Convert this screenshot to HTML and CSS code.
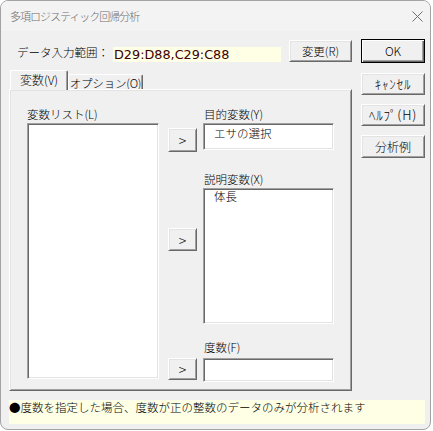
FILE: index.html
```html
<!DOCTYPE html>
<html lang="ja">
<head>
<meta charset="utf-8">
<title>多項ロジスティック回帰分析</title>
<link rel="stylesheet" href="styles.css">
</head>
<body>
<div class="window">
  <div class="titlebar">
    <span class="title">多項ロジスティック回帰分析</span>
    <svg class="close" viewBox="0 0 11 11" width="11" height="11"><path d="M0.5 0.5 L10.5 10.5 M10.5 0.5 L0.5 10.5" stroke="#6f6f6f" stroke-width="1" fill="none"/></svg>
  </div>
  <div class="client">
    <div class="main">
      <div class="left">
        <div class="range-row">
          <span class="range-label">データ入力範囲：</span>
          <span class="range-field">D29:D88,C29:C88</span>
          <button class="btn change">変更(R)</button>
        </div>
        <div class="tabs">
          <div class="tab active">変数(V)</div>
          <div class="tab other">オプション(O)</div>
        </div>
        <div class="panel">
          <div class="col-list">
            <div class="lbl">変数リスト(L)</div>
            <div class="box list"></div>
          </div>
          <div class="col-right">
            <div class="grp g1">
              <div class="lbl">目的変数(Y)</div>
              <button class="btn arrow a1">&gt;</button>
              <div class="box target"><span>エサの選択</span></div>
            </div>
            <div class="grp g2">
              <div class="lbl">説明変数(X)</div>
              <button class="btn arrow a2">&gt;</button>
              <div class="box expl"><span>体長</span></div>
            </div>
            <div class="grp g3">
              <div class="lbl">度数(F)</div>
              <button class="btn arrow a3">&gt;</button>
              <div class="box freq"></div>
            </div>
          </div>
        </div>
      </div>
      <div class="right">
        <button class="btn side ok">OK</button>
        <button class="btn side cancel hw">ｷｬﾝｾﾙ</button>
        <button class="btn side help hw">ﾍﾙﾌﾟ(H)</button>
        <button class="btn side example">分析例</button>
      </div>
    </div>
    <div class="note">●度数を指定した場合、度数が正の整数のデータのみが分析されます</div>
  </div>
</div>
</body>
</html>
```
FILE: styles.css
```css
* { box-sizing: border-box; }
body {
  margin: 0;
  background: #ffffff;
}
.window {
  width: 431px;
  height: 430px;
  border: 1px solid #a3a3a3;
  border-radius: 8px;
  background: #f0f0f0;
  overflow: hidden;
  font-family: "Noto Sans CJK JP", sans-serif;
  font-weight: 300;
  color: #000;
}
.titlebar {
  height: 30px;
  background: #f3f3f3;
  display: flex;
  align-items: center;
  padding-left: 9px;
}
.title {
  font-size: 11px;
  letter-spacing: -1px;
  line-height: 14px;
  color: #6e6e6e;
}
.close {
  margin-left: auto;
  margin-right: 7px;
  display: block;
}
.client {
  padding: 0 5px 0 8px;
}
.main {
  display: flex;
  padding-top: 8px;
  gap: 9px;
}
.left {
  width: 343px;
  display: flex;
  flex-direction: column;
}
.range-row {
  display: flex;
  align-items: center;
  height: 24px;
}
.range-label {
  width: 104px;
  padding-left: 8px;
  font-size: 11.5px;
  line-height: 14px;
  padding-top: 2px;
  white-space: nowrap;
}
.range-field {
  width: 168px;
  height: 15px;
  align-self: flex-end;
  margin-bottom: 1px;
  background: #ffffe6;
  font-family: "DejaVu Sans", sans-serif;
  font-weight: 400;
  font-size: 12.8px;
  line-height: 15px;
  color: #3c0000;
  padding-left: 1px;
}
.btn {
  font-family: "Noto Sans CJK JP", sans-serif;
  font-weight: 300;
  font-size: 11.5px;
  line-height: 14px;
  color: #000;
  background: #f0f0f0;
  border: 1px solid;
  border-color: #ffffff #696969 #696969 #ffffff;
  box-shadow: inset 1px 1px 0 #e3e3e3, inset -1px -1px 0 #a0a0a0;
  padding: 0;
  margin: 0;
  display: flex;
  align-items: center;
  justify-content: center;
  white-space: nowrap;
}
.change {
  margin-left: 8px;
  width: 63px;
  height: 22px;
}
.tabs {
  display: flex;
  align-items: flex-end;
  height: 18px;
  margin-top: 8px;
  margin-left: 1px;
}
.tab {
  font-size: 12px;
  line-height: 14px;
  white-space: nowrap;
  display: flex;
  align-items: center;
  justify-content: center;
  background: #f0f0f0;
  border-top: 1px solid #ffffff;
  border-left: 1px solid #ffffff;
  border-right: 1px solid #696969;
  box-shadow: inset -1px 0 0 #a0a0a0;
  border-radius: 2px 2px 0 0;
}
.tab.active {
  width: 58px;
  height: 20px;
  margin-bottom: -1px;
  position: relative;
  z-index: 1;
  padding-bottom: 1px;
}
.tab.other {
  width: 75px;
  height: 15px;
  padding-top: 1px;
  font-size: 11.5px;
  letter-spacing: -0.2px;
}
.panel {
  height: 302px;
  border: 1px solid;
  border-color: #ffffff #696969 #696969 #ffffff;
  box-shadow: inset 1px 1px 0 #e3e3e3, inset -1px -1px 0 #a0a0a0;
  display: flex;
  padding: 16px 0 0 17px;
}
.lbl {
  font-size: 11.5px;
  line-height: 17px;
  height: 17px;
  white-space: nowrap;
}
.col-list {
  width: 132px;
  margin-right: 9px;
  display: flex;
  flex-direction: column;
}
.box {
  background: #ffffff;
  border: 1px solid;
  border-color: #a0a0a0 #ffffff #ffffff #a0a0a0;
  box-shadow: inset 1px 1px 0 #696969, inset -1px -1px 0 #e3e3e3;
  font-size: 11.5px;
  line-height: 14px;
  padding: 2px 0 0 10px;
}
.list {
  height: 256px;
}
.col-right {
  width: 166px;
  display: flex;
  flex-direction: column;
}
.grp {
  display: grid;
  grid-template-columns: 29px 131px;
  column-gap: 6px;
  align-items: start;
}
.grp .lbl {
  grid-column: 2;
  grid-row: 1;
  padding-left: 1px;
}
.grp .arrow {
  grid-column: 1;
  grid-row: 2;
}
.grp .box {
  grid-column: 2;
  grid-row: 2;
}
.arrow {
  width: 29px;
  font-size: 14px;
  font-weight: 300;
}
.a1 { height: 24px; margin-top: 5px; }
.target { height: 27px; }
.g2 { margin-top: 19px; }
.a2 { height: 23px; margin-top: 40px; }
.expl { height: 136px; padding-top: 0; }
.g3 { margin-top: 15px; }
.g3 .lbl { margin-bottom: 2px; }
.a3 { height: 22px; }
.freq { height: 24px; }
.right {
  width: 64px;
  display: flex;
  flex-direction: column;
}
.side {
  width: 64px;
  font-size: 12px;
}
.hw {
  font-size: 13px;
  letter-spacing: 0.8px;
}
.ok {
  height: 24px;
  border-color: #000000;
  box-shadow: inset 1px 1px 0 #ffffff, inset -1px -1px 0 #696969, inset -2px -2px 0 #a0a0a0;
}
.cancel {
  height: 22px;
  margin-top: 10px;
}
.help {
  height: 22px;
  margin-top: 9px;
}
.example {
  height: 23px;
  margin-top: 9px;
}
.note {
  margin-top: 9px;
  height: 24px;
  background: #ffffe6;
  font-size: 11.5px;
  line-height: 14px;
  white-space: nowrap;
}
```
